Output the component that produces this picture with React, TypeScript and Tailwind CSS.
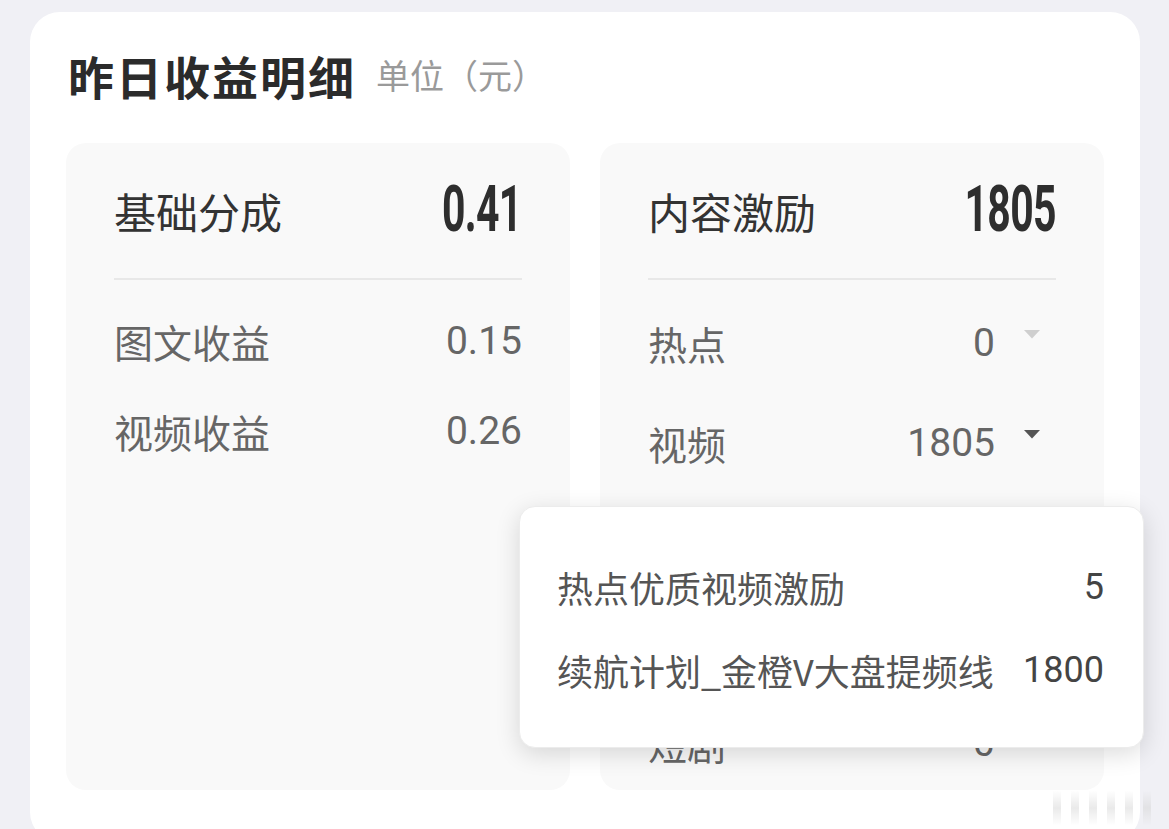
const cjk = { fontFamily: '"Noto Sans CJK SC", "Noto Sans", sans-serif' };
const num = { fontFamily: 'Roboto, "Noto Sans CJK SC", sans-serif' };

const baseRows = [
    { label: "图文收益", value: "0.15" },
    { label: "视频收益", value: "0.26" },
];

// rows 3 and 4 sit under the popover and show nothing in the picture
const contentRows = [
    { label: "热点", value: "0", caret: "light" },
    { label: "视频", value: "1805", caret: "dark" },
    { label: "", value: "", caret: "" },
    { label: "", value: "", caret: "" },
    { label: "短剧", value: "0", caret: "" },
];

const popupRows = [
    { label: "热点优质视频激励", value: "5" },
    { label: "续航计划_金橙V大盘提频线", value: "1800" },
];

function Caret({ tone }: { tone: string }) {
    if (!tone) return null;
    return (
        <svg width="18" height="10" viewBox="0 0 18 10" className="mb-[18px]">
            <path d="M1 1 L17 1 L9 9.5 Z" fill={tone === "dark" ? "#555555" : "#cfcfcf"} />
        </svg>
    );
}

function BigNumber({ value }: { value: string }) {
    return (
        <span
            className="inline-block text-[64px] font-bold leading-none text-[#2e2e2e] origin-right scale-x-[0.64] tracking-[-1px]"
            style={num}
        >
            {value}
        </span>
    );
}

export default function App() {
    return (
        <div className="relative w-[1169px] h-[829px] overflow-hidden bg-[#f0f0f5] pt-[12px] pl-[30px]" style={cjk}>
            <div className="relative w-[1110px] h-[830px] rounded-[30px] bg-white pt-[31px] px-[36px]">
                {/* Title */}
                <div className="flex items-center h-[64px] pl-[2px] mb-[2px]">
                    <h1 className="text-[46px] font-bold text-[#2b2b2b] leading-none tracking-[2px]">昨日收益明细</h1>
                    <span className="ml-[20px] text-[34px] text-[#9a9a9a] leading-none">单位（元）</span>
                </div>

                <div className="grid grid-cols-2 gap-[30px] mt-[36px]">
                    {/* Base share */}
                    <div className="h-[647px] rounded-[20px] bg-[#f9f9f9] px-[48px] pt-[32px] overflow-hidden">
                        <div className="flex items-center justify-between h-[70px]">
                            <span className="text-[42px] text-[#333]">基础分成</span>
                            <BigNumber value="0.41" />
                        </div>
                        <div className="mt-[33px] h-[2px] bg-[#e8e8e8]" />
                        <div className="mt-[16px]">
                            {baseRows.map((r) => (
                                <div key={r.label} className="flex items-center justify-between h-[90px]">
                                    <span className="text-[39px] text-[#666]">{r.label}</span>
                                    <span className="text-[39px] text-[#666]" style={num}>
                                        {r.value}
                                    </span>
                                </div>
                            ))}
                        </div>
                    </div>

                    {/* Content incentive */}
                    <div className="h-[647px] rounded-[20px] bg-[#f9f9f9] px-[48px] pt-[32px] overflow-hidden">
                        <div className="flex items-center justify-between h-[70px]">
                            <span className="text-[42px] text-[#333]">内容激励</span>
                            <BigNumber value="1805" />
                        </div>
                        <div className="mt-[33px] h-[2px] bg-[#e8e8e8]" />
                        <div className="mt-[13px]">
                            {contentRows.map((r, i) => (
                                <div key={i} className="flex items-center h-[100px]">
                                    <span className="flex-1 text-[39px] text-[#666]">{r.label}</span>
                                    <span className="text-[39px] text-[#666]" style={num}>
                                        {r.value}
                                    </span>
                                    <div className="w-[61px] flex items-center pl-[28px]">
                                        <Caret tone={r.caret} />
                                    </div>
                                </div>
                            ))}
                        </div>
                    </div>
                </div>

                {/* Popover over the video row */}
                <div className="absolute left-[489px] top-[494px] w-[625px] h-[242px] rounded-[16px] bg-white border border-[#ececec] shadow-[0_6px_24px_rgba(0,0,0,0.14)] pl-[37px] pr-[39px] pt-[38px]">
                    {popupRows.map((r) => (
                        <div key={r.label} className="flex items-center justify-between h-[83px]">
                            <span className="text-[36px] text-[#555]">{r.label}</span>
                            <span className="text-[36px] text-[#444]" style={num}>
                                {r.value}
                            </span>
                        </div>
                    ))}
                </div>
            </div>

            {/* faint watermark strokes, bottom right */}
            <div className="absolute right-[18px] bottom-[4px] flex items-end gap-[10px] opacity-50">
                <div className="w-[8px] h-[34px] bg-gradient-to-t from-transparent via-[#d6d6d6] to-transparent" />
                <div className="w-[8px] h-[34px] bg-gradient-to-t from-transparent via-[#d6d6d6] to-transparent" />
                <div className="w-[8px] h-[34px] bg-gradient-to-t from-transparent via-[#d6d6d6] to-transparent" />
                <div className="w-[8px] h-[34px] bg-gradient-to-t from-transparent via-[#d6d6d6] to-transparent" />
                <div className="w-[8px] h-[34px] bg-gradient-to-t from-transparent via-[#d6d6d6] to-transparent" />
                <div className="w-[8px] h-[34px] bg-gradient-to-t from-transparent via-[#d6d6d6] to-transparent" />
            </div>
        </div>
    );
}
